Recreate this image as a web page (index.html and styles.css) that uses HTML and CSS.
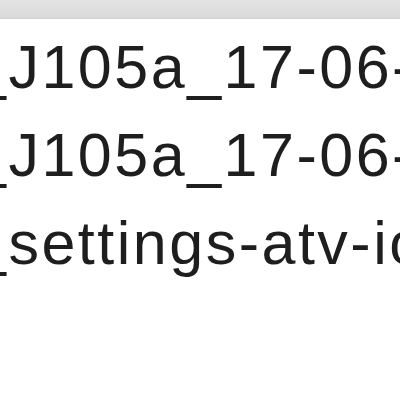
FILE: index.html
```html
<!DOCTYPE html>
<html>
<head>
<meta charset="utf-8">
<link rel="stylesheet" href="styles.css">
</head>
<body>
<div class="window">
  <div class="header"></div>
  <ul class="list">
    <li class="row"><span class="name">_J105a_17-06-2017.ipsw</span></li>
    <li class="row"><span class="name">_J105a_17-06-2017.plist</span></li>
    <li class="row"><span class="name">_settings-atv-ios.plist</span></li>
  </ul>
</div>
</body>
</html>
```
FILE: styles.css
```css
html, body {
  margin: 0;
  padding: 0;
  background: #ffffff;
}
.window {
  width: 400px;
  height: 400px;
  overflow: hidden;
  background: #ffffff;
}
.header {
  height: 18px;
  background: linear-gradient(#e3e3e3, #d9d9d9);
  border-bottom: 1px solid #d0d0d0;
}
.list {
  list-style: none;
  margin: 4px 0 0;
  padding: 0;
}
.row {
  height: 88px;
  white-space: nowrap;
  overflow: hidden;
}
.name {
  display: block;
  margin-left: -28px;
  font-family: "Liberation Sans", Arial, sans-serif;
  font-size: 61px;
  letter-spacing: 2.5px;
  line-height: 88px;
  color: #1e1e1e;
}
```
